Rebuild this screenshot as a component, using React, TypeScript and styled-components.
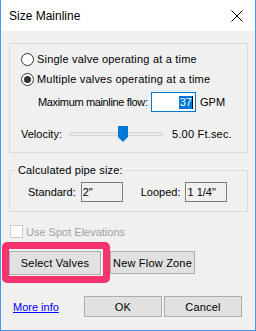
import React from "react";
import styled, { createGlobalStyle } from "styled-components";

const Global = createGlobalStyle`
  html, body { margin: 0; padding: 0; background: #ffffff; }
  * { box-sizing: border-box; }
`;

const Window = styled.div`
  width: 256px;
  height: 331px;
  border: 1px solid #4a95e4;
  border-top: none;
  background: #f0f0f0;
  display: flex;
  flex-direction: column;
  font-family: "Liberation Sans", Arial, sans-serif;
  font-size: 11px;
  color: #000;
  white-space: nowrap;
`;

const TitleBar = styled.div`
  height: 31px;
  background: #ffffff;
  display: flex;
  align-items: center;
  padding: 0 12px 0 8px;
`;

const Title = styled.div`
  flex: 1;
  font-size: 12px;
  padding-top: 1px;
`;

const Body = styled.div`
  flex: 1;
  display: flex;
  flex-direction: column;
  padding: 0 7px 0 8px;
`;

const GroupBox = styled.div<{ $mt: number; $h: number }>`
  position: relative;
  margin-top: ${(p) => p.$mt}px;
  height: ${(p) => p.$h}px;
  border: 1px solid #dcdcdc;
  display: flex;
  flex-direction: column;
`;

const Legend = styled.div`
  position: absolute;
  top: -7px;
  left: 6px;
  padding: 0 2px;
  background: #f0f0f0;
  line-height: 13px;
  letter-spacing: 0.15px;
`;

const RadioRow = styled.label<{ $mt: number }>`
  display: flex;
  align-items: center;
  height: 14px;
  margin-top: ${(p) => p.$mt}px;
  padding-left: 11px;
  gap: 3px;
  letter-spacing: 0.2px;
`;

const RadioCircle = styled.span<{ $checked?: boolean }>`
  width: 13px;
  height: 13px;
  border-radius: 50%;
  border: 1px solid #333333;
  background: #ffffff;
  display: flex;
  align-items: center;
  justify-content: center;
  &::after {
    content: "";
    display: ${(p) => (p.$checked ? "block" : "none")};
    width: 7px;
    height: 7px;
    border-radius: 50%;
    background: #333333;
  }
`;

const FlowRow = styled.div`
  display: flex;
  align-items: center;
  height: 20px;
  margin-top: 6px;
  padding-left: 28px;
`;

const FlowLabel = styled.span`
  width: 113px;
  flex-shrink: 0;
  letter-spacing: -0.35px;
`;

const FlowInput = styled.div`
  width: 45px;
  height: 20px;
  flex-shrink: 0;
  border: 1px solid #0078d7;
  background: #ffffff;
  display: flex;
  align-items: center;
  justify-content: flex-end;
  padding-right: 2px;
`;

const Selected = styled.span`
  background: #0078d7;
  color: #ffffff;
  line-height: 13px;
  padding: 0 0 0 1px;
  border-right: 1px solid #000;
`;

const Unit = styled.span`
  margin-left: 4px;
`;

const VelocityRow = styled.div`
  display: flex;
  align-items: center;
  height: 16px;
  margin-top: 14px;
  padding-left: 11px;
`;

const VelocityLabel = styled.span`
  width: 48px;
`;

const Slider = styled.div`
  position: relative;
  width: 94px;
  height: 16px;
  display: flex;
  align-items: center;
`;

const Track = styled.div`
  width: 100%;
  height: 4px;
  background: #e7eaea;
  border: 1px solid #d6d6d6;
`;

const Thumb = styled.svg`
  position: absolute;
  top: 0;
  left: 49px;
`;

const SliderValue = styled.span`
  margin-left: 9px;
  letter-spacing: 0.2px;
`;

const PipeRow = styled.div`
  display: flex;
  align-items: center;
  margin-top: 11px;
  padding-left: 18px;
`;

const PipeLabel = styled.span<{ $ml?: number }>`
  margin-left: ${(p) => p.$ml ?? 0}px;
  margin-right: 5px;
`;

const PipeBox = styled.div`
  width: 42px;
  height: 20px;
  border: 1px solid #7a7a7a;
  background: #f0f0f0;
  display: flex;
  align-items: center;
  padding-left: 1px;
`;

const CheckRow = styled.label`
  display: flex;
  align-items: center;
  height: 13px;
  margin-top: 13px;
  margin-left: 1px;
  gap: 3px;
  color: #a0a0a0;
`;

const CheckBox = styled.span`
  width: 13px;
  height: 13px;
  border: 1px solid #cccccc;
  background: #ffffff;
`;

const ButtonRow = styled.div`
  display: flex;
  align-items: center;
  margin-top: 4px;
  margin-left: -7px;
`;

const Highlight = styled.div`
  border: 7px solid #f7336e;
  border-radius: 5px;
  padding: 2px 2px 1px 0;
  display: flex;
`;

const Button = styled.button<{ $w: number; $h?: number }>`
  width: ${(p) => p.$w}px;
  height: ${(p) => p.$h ?? 23}px;
  background: #e1e1e1;
  border: 1px solid #adadad;
  font-family: "Liberation Sans", Arial, sans-serif;
  font-size: 11px;
  color: #000;
  padding: 0;
  margin: 0;
  display: flex;
  align-items: center;
  justify-content: center;
  white-space: nowrap;
  letter-spacing: 0.2px;
`;

const FooterRow = styled.div`
  display: flex;
  align-items: center;
  margin-top: 13px;
  padding-left: 4px;
  padding-right: 6px;
  gap: 2px;
`;

const Link = styled.a`
  color: #0000ff;
  text-decoration: underline;
  margin-right: auto;
`;

export default function App() {
  return (
    <>
      <Global />
      <Window>
        <TitleBar>
          <Title>Size Mainline</Title>
          <svg width="12" height="12" viewBox="0 0 12 12">
            <path d="M0.5 0.5 L11.5 11.5 M11.5 0.5 L0.5 11.5" stroke="#000" strokeWidth="1" fill="none" />
          </svg>
        </TitleBar>
        <Body>
          <GroupBox $mt={12} $h={110}>
            <RadioRow $mt={8}>
              <RadioCircle />
              <span>Single valve operating at a time</span>
            </RadioRow>
            <RadioRow $mt={6}>
              <RadioCircle $checked />
              <span>Multiple valves operating at a time</span>
            </RadioRow>
            <FlowRow>
              <FlowLabel>Maximum mainline flow:</FlowLabel>
              <FlowInput>
                <Selected>37</Selected>
              </FlowInput>
              <Unit>GPM</Unit>
            </FlowRow>
            <VelocityRow>
              <VelocityLabel>Velocity:</VelocityLabel>
              <Slider>
                <Track />
                <Thumb width="10" height="16" viewBox="0 0 10 16">
                  <path d="M0 0 H10 V11 L5 16 L0 11 Z" fill="#0078d7" />
                </Thumb>
              </Slider>
              <SliderValue>5.00 Ft.sec.</SliderValue>
            </VelocityRow>
          </GroupBox>
          <GroupBox $mt={17} $h={42}>
            <Legend>Calculated pipe size:</Legend>
            <PipeRow>
              <PipeLabel>Standard:</PipeLabel>
              <PipeBox>2"</PipeBox>
              <PipeLabel $ml={18}>Looped:</PipeLabel>
              <PipeBox>1 1/4"</PipeBox>
            </PipeRow>
          </GroupBox>
          <CheckRow>
            <CheckBox />
            <span>Use Spot Elevations</span>
          </CheckRow>
          <ButtonRow>
            <Highlight>
              <Button $w={92} $h={24}>Select Valves</Button>
            </Highlight>
            <Button $w={85}>New Flow Zone</Button>
          </ButtonRow>
          <FooterRow>
            <Link href="#">More info</Link>
            <Button $w={78} $h={21}>OK</Button>
            <Button $w={78} $h={21}>Cancel</Button>
          </FooterRow>
        </Body>
      </Window>
    </>
  );
}
